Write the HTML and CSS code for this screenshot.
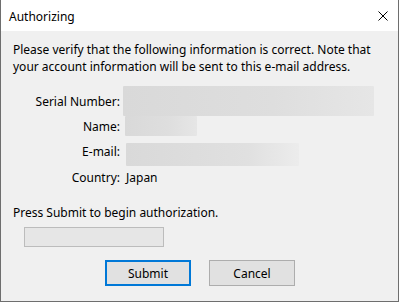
FILE: index.html
```html
<html>
	<head>
		<link rel="stylesheet" href="styles.css">
	</head>
	<body>
		<div class="window">
			<div class="titlebar">
				<span class="title">Authorizing</span>
				<svg class="close" width="10" height="10" viewBox="0 0 10 10" xmlns="http://www.w3.org/2000/svg">
					<path d="M0.5 0.5 L9.5 9.5 M9.5 0.5 L0.5 9.5" stroke="#000" stroke-width="1" fill="none"></path>
				</svg>
			</div>
			<div class="content">
				<p class="intro">Please verify that the following information is correct. Note that your account information will be sent to this e-mail address.</p>
				<div class="fields">
					<div class="label">Serial Number:</div>
					<div class="value"><div class="blur serial"></div></div>
					<div class="label">Name:</div>
					<div class="value"><div class="blur name"></div></div>
					<div class="label">E-mail:</div>
					<div class="value bottom"><div class="blur email"></div></div>
					<div class="label">Country:</div>
					<div class="value country">Japan</div>
				</div>
				<p class="press">Press Submit to begin authorization.</p>
				<div class="progress"></div>
				<div class="buttons">
					<button class="btn default">Submit</button>
					<button class="btn">Cancel</button>
				</div>
			</div>
		</div>
	</body>
</html>
```

FILE: styles.css
```css
html body {
	margin: 0;
	background-color: #f0f0f0;
}

.window {
	width: 399px;
	height: 302px;
	box-sizing: border-box;
	border: 1px solid #6e6e6e;
	border-top: none;
	display: flex;
	flex-direction: column;
	font-family: "Noto Sans", sans-serif;
	font-size: 12px;
	color: #000;
	background-color: #f0f0f0;
}

.titlebar {
	height: 31px;
	background-color: #fff;
	display: flex;
	align-items: center;
	justify-content: space-between;
	padding: 0 10px 0 8px;
	flex-shrink: 0;
}

.title {
	padding-top: 1px;
}

.close {
	margin-top: 1px;
}

.content {
	padding: 0 0 0 12px;
}

.intro {
	margin: 10px 0 0 0;
	line-height: 17px;
	width: 370px;
}

.fields {
	display: grid;
	grid-template-columns: 107px auto;
	grid-template-rows: 30px 20px 30px 22px;
	margin-top: 11px;
}

.label {
	text-align: right;
	align-self: center;
}

.value {
	align-self: center;
}

.value.bottom {
	align-self: end;
}

.blur {
	background: linear-gradient(90deg, #d9d9d9, #dedede 60%, #e6e6e6);
	border-radius: 1px;
}

.serial {
	margin-left: 3px;
	width: 251px;
	height: 30px;
}

.name {
	margin-left: 5px;
	width: 72px;
	height: 20px;
}

.email {
	margin-left: 6px;
	width: 173px;
	height: 23px;
	background: linear-gradient(90deg, #d9d9d9, #e0e0e0 70%, #ececec);
}

.country {
	padding-left: 6px;
}

.press {
	margin: 17px 0 0 0;
	line-height: 16px;
}

.progress {
	margin: 6px 0 0 11px;
	width: 140px;
	height: 20px;
	box-sizing: border-box;
	border: 1px solid #bcbcbc;
	background-color: #e6e6e6;
}

.buttons {
	display: flex;
	gap: 18px;
	margin: 13px 0 0 92px;
}

.btn {
	width: 86px;
	height: 26px;
	box-sizing: border-box;
	border: 1px solid #adadad;
	background-color: #e1e1e1;
	font-family: "Noto Sans", sans-serif;
	font-size: 12px;
	color: #000;
	padding: 0;
	border-radius: 0;
}

.btn.default {
	border: 2px solid #0078d7;
}
```
